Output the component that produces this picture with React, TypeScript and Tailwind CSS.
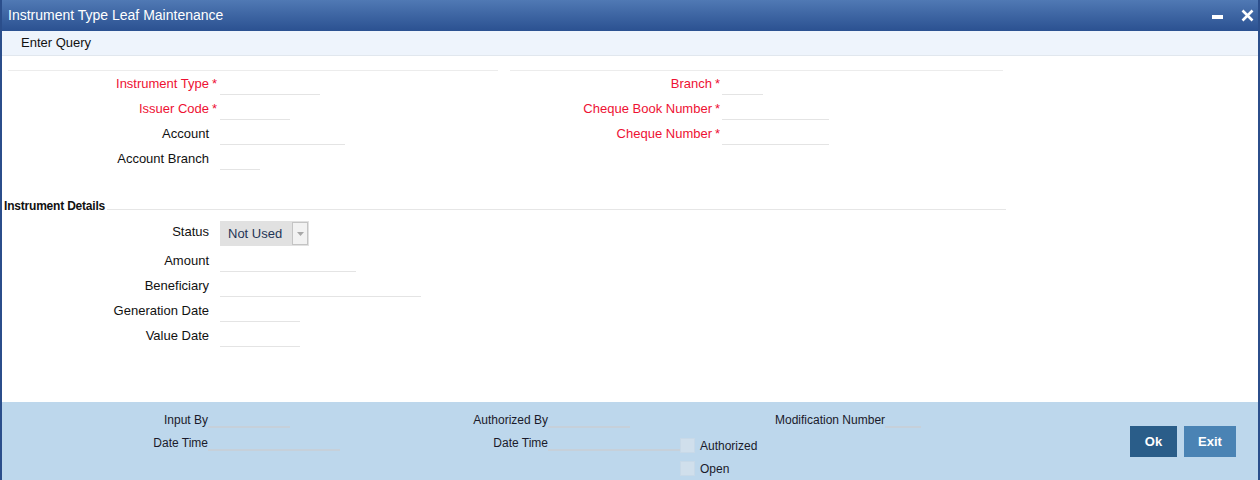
import React from "react";

const font = { fontFamily: '"Liberation Sans", Arial, sans-serif' };

type Field = { label: string; required?: boolean; width: number };

const leftTop: Field[] = [
  { label: "Instrument Type", required: true, width: 100 },
  { label: "Issuer Code", required: true, width: 70 },
  { label: "Account", width: 125 },
  { label: "Account Branch", width: 40 },
];

const rightTop: Field[] = [
  { label: "Branch", required: true, width: 41 },
  { label: "Cheque Book Number", required: true, width: 107 },
  { label: "Cheque Number", required: true, width: 107 },
];

const details: Field[] = [
  { label: "Amount", width: 136 },
  { label: "Beneficiary", width: 201 },
  { label: "Generation Date", width: 80 },
  { label: "Value Date", width: 80 },
];

function FormRow({ f, labelW, gap }: { f: Field; labelW: string; gap: string }) {
  return (
    <div className="flex h-[25px] items-start">
      <div
        className={`${labelW} shrink-0 text-right text-[13px] leading-[25px] ${
          f.required ? "text-[#ee1133]" : "text-[#111111]"
        }`}
      >
        {f.label}
      </div>
      <div className={`${gap} shrink-0 pl-[3px] text-[13px] leading-[25px] text-[#ee1133]`}>
        {f.required ? "*" : ""}
      </div>
      <div className="h-[24px] border-b border-[#e4e4e4]" style={{ width: f.width }} />
    </div>
  );
}

function FooterField({ label, width, labelW }: { label: string; width: string; labelW: string }) {
  return (
    <div className="flex h-[23px] items-start">
      <div className={`${labelW} shrink-0 text-right text-[12px] leading-[23px] text-[#1a1a2a]`}>
        {label}
      </div>
      <div className={`${width} h-[19px] border-b-2 border-[#c6d0da]`} />
    </div>
  );
}

export default function App() {
  return (
    <div
      className="flex h-[480px] w-[1260px] flex-col overflow-hidden border-x-2 border-[#2b4e8b] bg-white"
      style={font}
    >
      {/* Title bar */}
      <div className="flex h-[31px] shrink-0 items-center bg-gradient-to-b from-[#5079b4] to-[#2b5191] pl-[6px] pr-[4px]">
        <span className="text-[14px] text-white">Instrument Type Leaf Maintenance</span>
        <div className="ml-auto flex items-center gap-[18px]">
          <svg width="11" height="12" viewBox="0 0 11 12">
            <rect x="0" y="5" width="11" height="4" fill="white" />
          </svg>
          <svg width="13" height="13" viewBox="0 0 13 13">
            <path d="M1.5 1.5 L11.5 11.5 M11.5 1.5 L1.5 11.5" stroke="white" strokeWidth="2.6" />
          </svg>
        </div>
      </div>

      {/* Toolbar */}
      <div className="flex h-[25px] shrink-0 items-center border-b border-[#e1e7ee] bg-[#eef4fc] pl-[19px]">
        <span className="text-[13px] text-[#111111]">Enter Query</span>
      </div>

      {/* Main */}
      <div className="flex flex-1 flex-col pt-[14px]">
        <div className="flex">
          <div className="ml-[6px] h-px w-[490px] bg-[#ececec]" />
          <div className="ml-[12px] h-px w-[493px] bg-[#ececec]" />
        </div>

        <div className="flex">
          <div className="w-[498px] shrink-0">
            {leftTop.map((f) => (
              <FormRow key={f.label} f={f} labelW="w-[207px]" gap="w-[11px]" />
            ))}
          </div>
          <div>
            {rightTop.map((f) => (
              <FormRow key={f.label} f={f} labelW="w-[212px]" gap="w-[10px]" />
            ))}
          </div>
        </div>

        {/* Instrument Details */}
        <div className="mt-[28px] flex h-[14px] w-[1004px] items-end pl-[2px]">
          <span className="text-[12px] font-bold leading-[14px] tracking-[-0.2px] text-[#111111]">
            Instrument Details
          </span>
          <div className="mb-[3px] ml-[2px] h-px flex-1 bg-[#e6e6e6]" />
        </div>

        <div className="mt-[6px] flex h-[29px] items-start">
          <div className="w-[207px] shrink-0 text-right text-[13px] leading-[25px] text-[#111111]">Status</div>
          <div className="w-[11px] shrink-0" />
          <div className="mt-[2px] flex h-[25px] w-[89px] items-center bg-[#e1e1e1] pl-[8px]">
            <span className="mt-[1px] text-[13px] text-[#1f3556]">Not Used</span>
            <div className="ml-auto mr-px flex h-[23px] w-[16px] items-center justify-center border border-[#c4c4c4] bg-[#f2f2f2]">
              <svg width="7" height="4" viewBox="0 0 7 4">
                <path d="M0 0 L7 0 L3.5 4 Z" fill="#a8a8a8" />
              </svg>
            </div>
          </div>
        </div>

        {details.map((f) => (
          <FormRow key={f.label} f={f} labelW="w-[207px]" gap="w-[11px]" />
        ))}
      </div>

      {/* Footer */}
      <div className="flex h-[78px] shrink-0 bg-[#bdd7ec] pt-[7px]">
        <div className="w-[338px] shrink-0">
          <FooterField label="Input By" width="w-[82px]" labelW="w-[206px]" />
          <FooterField label="Date Time" width="w-[132px]" labelW="w-[206px]" />
        </div>
        <div className="w-[340px] shrink-0">
          <FooterField label="Authorized By" width="w-[82px]" labelW="w-[208px]" />
          <FooterField label="Date Time" width="w-[132px]" labelW="w-[208px]" />
        </div>
        <div className="flex flex-col">
          <div className="flex h-[23px] items-start pl-[95px]">
            <span className="text-[12px] leading-[23px] text-[#1a1a2a]">Modification Number</span>
            <div className="h-[19px] w-[36px] border-b-2 border-[#c6d0da]" />
          </div>
          <div className="mt-[2px] flex h-[23px] items-center gap-[5px]">
            <div className="h-[15px] w-[15px] border border-[#c8d9e8] bg-[#d0dfec]" />
            <span className="text-[12px] text-[#1a1a2a]">Authorized</span>
          </div>
          <div className="flex h-[23px] items-center gap-[5px]">
            <div className="h-[15px] w-[15px] border border-[#c8d9e8] bg-[#d0dfec]" />
            <span className="text-[12px] text-[#1a1a2a]">Open</span>
          </div>
        </div>
        <div className="ml-auto mr-[22px] mt-[17px] flex h-[31px] gap-[7px]">
          <button className="h-[31px] w-[47px] bg-[#2a5d89] text-[13px] font-bold text-white">Ok</button>
          <button className="h-[31px] w-[52px] bg-[#4a83b4] text-[13px] font-bold text-white">Exit</button>
        </div>
      </div>
    </div>
  );
}
